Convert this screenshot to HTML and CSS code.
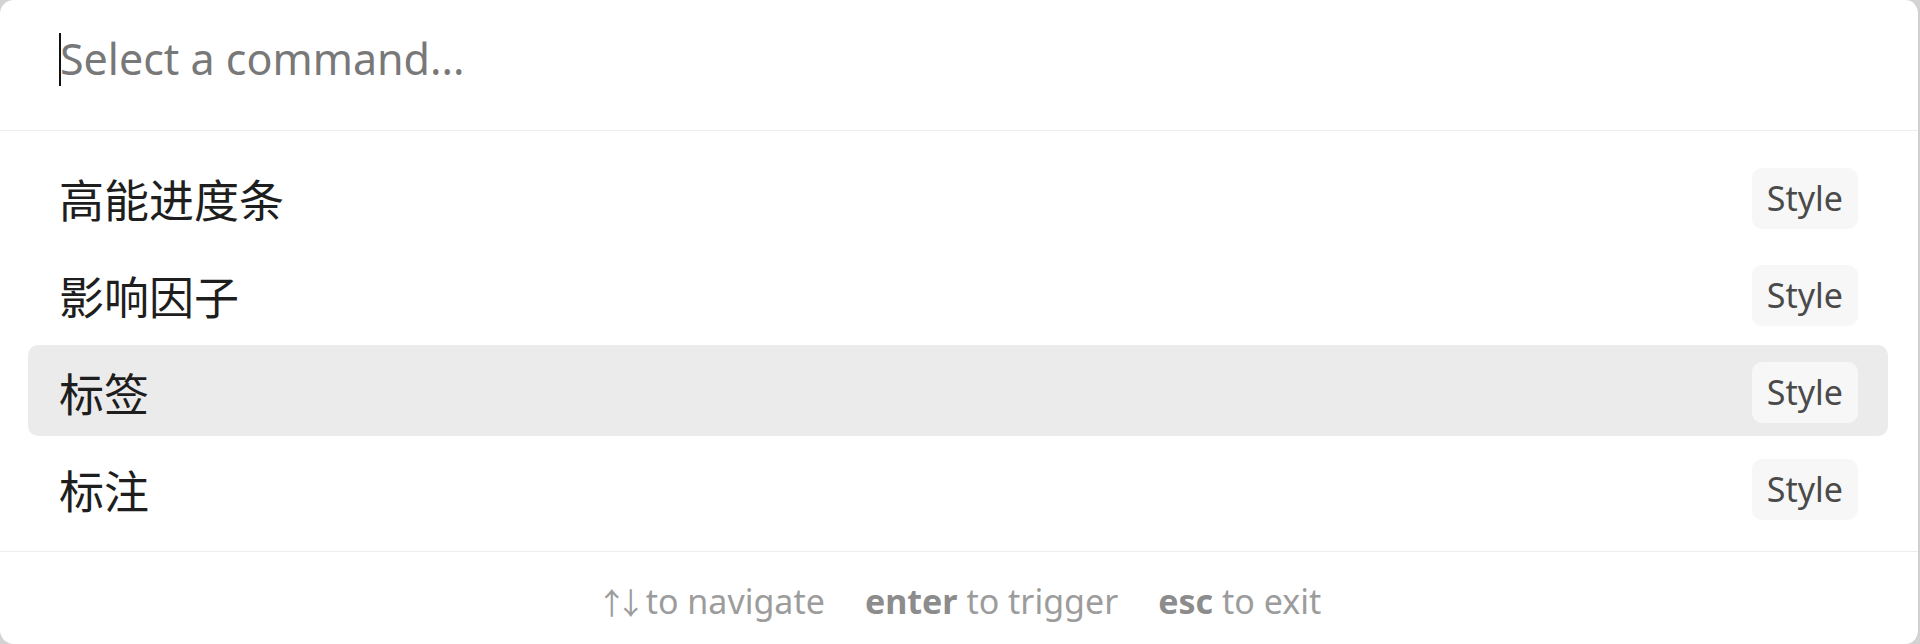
FILE: index.html
```html
<!DOCTYPE html>
<html lang="zh-CN">
<head>
<meta charset="utf-8">
<title>Command palette</title>
<link rel="stylesheet" href="styles.css">
</head>
<body>
<div class="palette">
  <div class="search">
    <span class="caret"></span><span class="placeholder">Select a command...</span>
  </div>
  <div class="list">
    <div class="item"><span class="name">高能进度条</span><span class="tag">Style</span></div>
    <div class="item"><span class="name">影响因子</span><span class="tag">Style</span></div>
    <div class="item selected"><span class="name">标签</span><span class="tag">Style</span></div>
    <div class="item"><span class="name">标注</span><span class="tag">Style</span></div>
  </div>
  <div class="footer">
    <span class="hint"><span class="arrows">↑↓</span> to navigate</span>
    <span class="hint"><b>enter</b> to trigger</span>
    <span class="hint"><b>esc</b> to exit</span>
  </div>
</div>
</body>
</html>
```
FILE: styles.css
```css
html, body {
  margin: 0;
  padding: 0;
  height: 100%;
}
body {
  background: #d3d3d3;
  font-family: "Noto Sans", "Noto Sans CJK SC", sans-serif;
  overflow: hidden;
}
.palette {
  box-sizing: border-box;
  width: 1920px;
  height: 644px;
  background: #ffffff;
  border-radius: 14px;
  border-right: 2px solid #d0d0d0;
  display: flex;
  flex-direction: column;
}
.search {
  box-sizing: border-box;
  height: 131px;
  padding: 27px 59px 0;
  border-bottom: 1px solid #eeeeee;
  display: flex;
  align-items: flex-start;
}
.caret {
  display: inline-block;
  width: 2px;
  height: 53px;
  margin-top: 6px;
  background: #111;
  margin-right: -1px;
}
.placeholder {
  font-size: 43px;
  line-height: 64px;
  color: #787878;
}
.list {
  box-sizing: border-box;
  height: 420px;
  padding: 20px 30px 18px 28px;
  display: flex;
  flex-direction: column;
  gap: 6px;
}
.item {
  height: 91px;
  padding: 0 30px 0 31px;
  border-radius: 10px;
  display: flex;
  align-items: center;
  justify-content: space-between;
}
.item.selected {
  background: #ebebeb;
}
.name {
  font-family: "Noto Sans CJK SC", sans-serif;
  font-size: 45px;
  color: #1e1e1e;
  line-height: 1;
  padding-top: 3px;
}
.tag {
  height: 61px;
  line-height: 61px;
  margin-top: 3px;
  padding: 0 15px;
  border-radius: 10px;
  background: #f7f7f7;
  font-size: 34px;
  color: #4a4a4a;
}
.footer {
  flex: 1;
  border-top: 1px solid #eeeeee;
  display: flex;
  justify-content: center;
  align-items: center;
  gap: 40px;
  padding-top: 6px;
  font-size: 34px;
  color: #9c9c9c;
}
.arrows {
  font-size: 30px;
  letter-spacing: -11px;
  margin-right: 2px;
}
.footer b {
  font-weight: 700;
  color: #8c8c8c;
}
```
